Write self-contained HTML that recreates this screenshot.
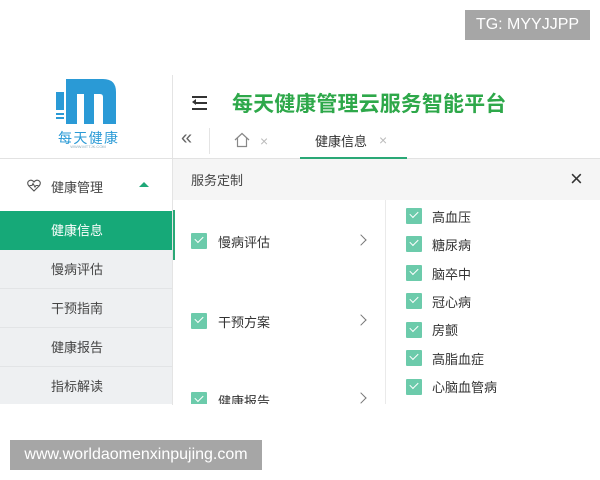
<!DOCTYPE html>
<html><head><meta charset="utf-8"><style>
*{margin:0;padding:0;box-sizing:border-box}
body{width:600px;height:480px;background:#fff;position:relative;overflow:hidden;font-family:"Liberation Sans","Noto Sans CJK SC",sans-serif;color:#333}
.a{position:absolute}
.cn{font-size:13px;white-space:nowrap}
.cb{position:absolute;width:16px;height:16px;background:#6ccbab;border-radius:1px}
.cb:after{content:"";position:absolute;left:4px;top:3px;width:7px;height:4px;border-left:1.6px solid #fff;border-bottom:1.6px solid #fff;transform:rotate(-45deg)}
.chev{position:absolute;width:8px;height:8px;border-top:1.3px solid #777;border-right:1.3px solid #777;transform:rotate(45deg)}
.side{position:absolute;left:0;width:172px;height:39px;background:#eef0f2;border-bottom:1px solid #e2e4e6;padding-left:51px;line-height:39px;font-size:13px;color:#444}
</style></head><body>
<!-- logo -->
<svg class="a" style="left:50px;top:76px" width="75" height="74" viewBox="50 76 75 74">
<rect x="56" y="92" width="8" height="18" fill="#2a9ad6"/>
<rect x="56" y="113" width="8" height="2" fill="#2a9ad6"/>
<rect x="56" y="117" width="8" height="2" fill="#2a9ad6"/>
<path d="M66 79 H103 Q116 79 116 92 V124 H103 V97 Q103 94 100 94 H94 V124 H84 V94 H77 V124 H66 Z" fill="#2a9ad6"/>
<text x="88" y="143" font-size="14" fill="#2a9ad6" text-anchor="middle" font-family="Noto Sans CJK SC" textLength="60">每天健康</text>
<text x="88" y="148" font-size="4" fill="#8ab" text-anchor="middle">WWW.MTTJK.COM</text>
</svg>
<div class="a" style="left:172px;top:75px;width:1px;height:330px;background:#e4e4e4"></div>
<div class="a" style="left:0;top:158px;width:600px;height:1px;background:#e2e2e2"></div>
<!-- header -->
<div class="a" style="left:192px;top:96px;width:15px;height:2px;background:#333"></div>
<div class="a" style="left:196px;top:102px;width:11px;height:1.5px;background:#333"></div>
<div class="a" style="left:192px;top:108px;width:15px;height:2px;background:#333"></div>
<div class="a" style="left:192px;top:99px;border:3px solid transparent;border-right:4px solid #333;border-left:0"></div>
<div class="a" style="left:232px;top:88px;font-size:21px;font-weight:bold;color:#2ea84a;letter-spacing:0.1px;white-space:nowrap">每天健康管理云服务智能平台</div>
<!-- tabs -->
<div class="a" style="left:181px;top:127px;font-size:20px;color:#666">«</div>
<div class="a" style="left:209px;top:128px;width:1px;height:26px;background:#e4e4e4"></div>
<svg class="a" style="left:234px;top:132px" width="16" height="16"><path d="M1 8 L8 1.5 L15 8 M3.5 6 V14.5 H12.5 V6" fill="none" stroke="#888" stroke-width="1.2"/></svg>
<div class="a" style="left:260px;top:133px;font-size:14px;color:#bbb">×</div>
<div class="a cn" style="left:315px;top:131px;color:#333">健康信息</div>
<div class="a" style="left:379px;top:132px;font-size:14px;color:#bbb">×</div>
<div class="a" style="left:300px;top:157px;width:107px;height:2px;background:#2aa876"></div>
<!-- sidebar -->
<svg class="a" style="left:27px;top:179px" width="14" height="13"><path d="M7 12 L1.5 6.5 Q-0.5 3 2.5 1.5 Q5 0.5 7 3 Q9 0.5 11.5 1.5 Q14.5 3 12.5 6.5 Z M2.5 6.5 H5 L6 4.5 L8 8 L9 6.5 H11.5" fill="none" stroke="#555" stroke-width="1.1"/></svg>
<div class="a cn" style="left:51px;top:177px;color:#444">健康管理</div>
<div class="a" style="left:139px;top:182px;border:5px solid transparent;border-bottom:5px solid #1ea878;border-top:0"></div>
<div class="a" style="left:0;top:211px;width:172px;height:39px;background:#16a978;color:#fff;font-size:13px;line-height:39px;padding-left:51px">健康信息</div>
<div class="side" style="top:250px">慢病评估</div>
<div class="side" style="top:289px">干预指南</div>
<div class="side" style="top:328px">健康报告</div>
<div class="side" style="top:367px;height:37px;border:0">指标解读</div>
<!-- panel -->
<div class="a" style="left:173px;top:159px;width:427px;height:41px;background:#f5f5f5"></div>
<div class="a cn" style="left:191px;top:170px;color:#444">服务定制</div>
<div class="a" style="left:570px;top:166px;font-size:22px;color:#333;line-height:26px">×</div>
<div class="a" style="left:385px;top:200px;width:1px;height:204px;background:#eaeaea"></div>
<div class="a" style="left:173px;top:210px;width:2px;height:50px;background:#2aa876"></div>
<div class="cb" style="left:191px;top:233px"></div><div class="a cn" style="left:218px;top:232px">慢病评估</div><div class="chev" style="left:357px;top:236px"></div>
<div class="cb" style="left:191px;top:313px"></div><div class="a cn" style="left:218px;top:312px">干预方案</div><div class="chev" style="left:357px;top:316px"></div>
<div class="cb" style="left:191px;top:392px"></div><div class="a cn" style="left:218px;top:391px">健康报告</div><div class="chev" style="left:357px;top:394px"></div>
<div class="a" style="left:173px;top:404px;width:427px;height:76px;background:#fff"></div>
<div class="cb" style="left:406px;top:208px"></div><div class="a cn" style="left:432px;top:207px">高血压</div>
<div class="cb" style="left:406px;top:236px"></div><div class="a cn" style="left:432px;top:235px">糖尿病</div>
<div class="cb" style="left:406px;top:265px"></div><div class="a cn" style="left:432px;top:264px">脑卒中</div>
<div class="cb" style="left:406px;top:293px"></div><div class="a cn" style="left:432px;top:292px">冠心病</div>
<div class="cb" style="left:406px;top:322px"></div><div class="a cn" style="left:432px;top:320px">房颤</div>
<div class="cb" style="left:406px;top:350px"></div><div class="a cn" style="left:432px;top:349px">高脂血症</div>
<div class="cb" style="left:406px;top:379px"></div><div class="a cn" style="left:432px;top:377px">心脑血管病</div>
<!-- overlays -->
<div class="a" style="left:465px;top:10px;width:125px;height:30px;background:#a6a6a6;color:#fff;font-size:16px;line-height:30px;text-align:center">TG: MYYJJPP</div>
<div class="a" style="left:10px;top:440px;width:252px;height:30px;background:#a6a6a6;color:#fff;font-size:16px;line-height:30px;text-align:center;white-space:nowrap">www.worldaomenxinpujing.com</div>
</body></html>
